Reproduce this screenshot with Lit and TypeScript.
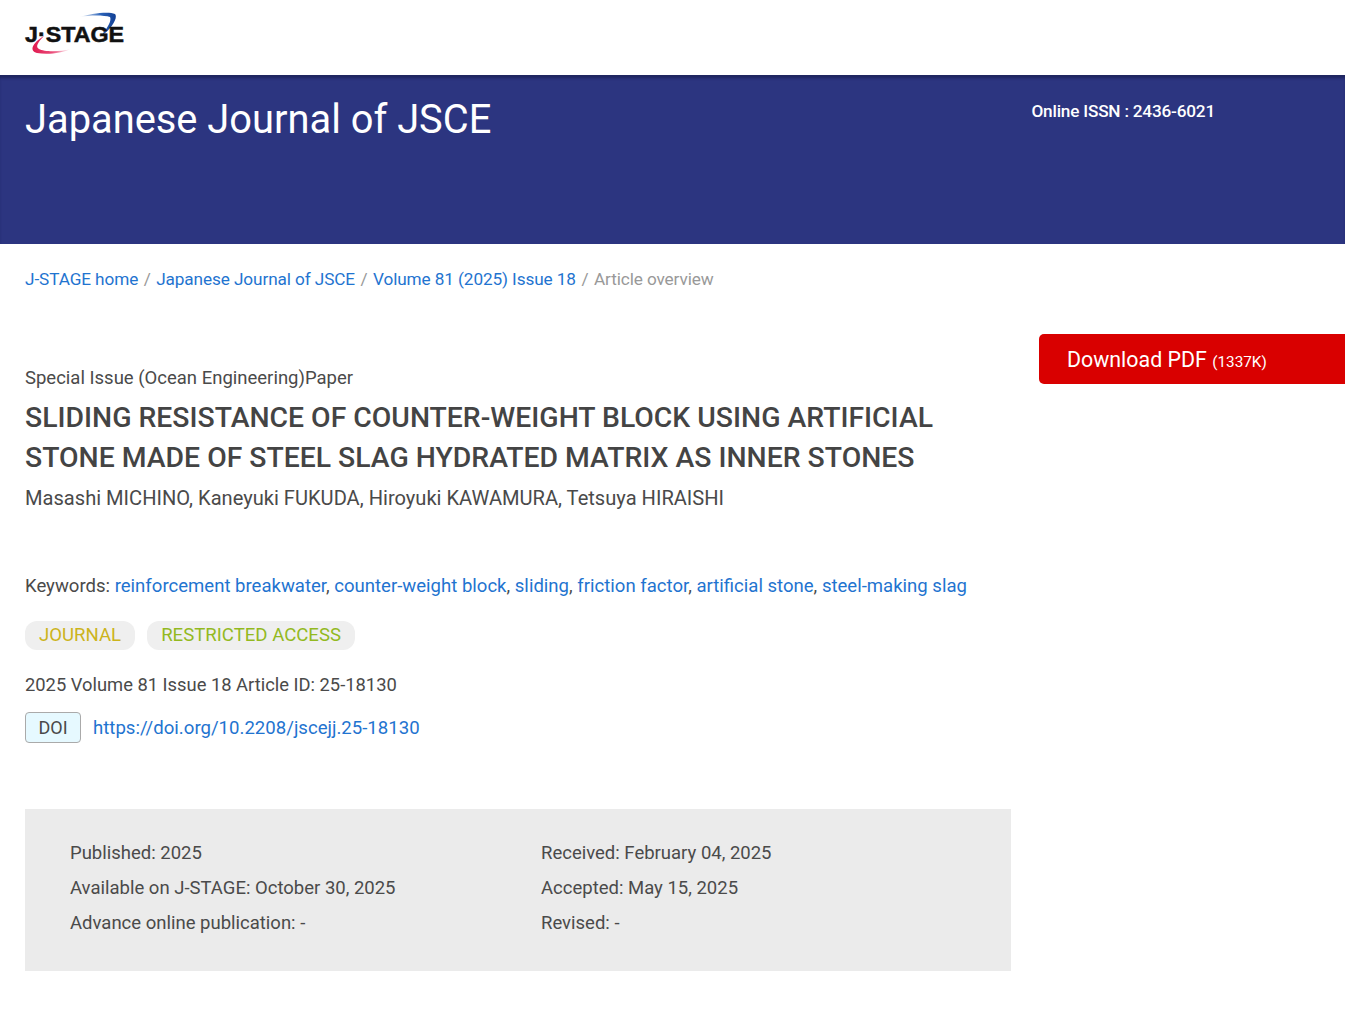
import { html, css, LitElement } from 'lit';
import { customElement } from 'lit/decorators.js';

const KEYWORDS = [
  'reinforcement breakwater',
  'counter-weight block',
  'sliding',
  'friction factor',
  'artificial stone',
  'steel-making slag',
];

@customElement('app-root')
export class AppRoot extends LitElement {
  static styles = css`
    :host {
      display: block;
      height: 1012px;
      overflow: hidden;
      background: #fff;
      font-family: Roboto, "Liberation Sans", sans-serif;
      color: #4a4a4a;
      font-size: 18.5px;
    }
    a { color: #1f74d0; text-decoration: none; }
    .top { height: 75px; padding: 12px 0 0 24px; box-sizing: border-box; }
    .top svg { display: block; }
    .band {
      height: 169px;
      background: #2c3580;
      border-top: 1px solid #1f2660;
      box-sizing: border-box;
      box-shadow: inset 0 3px 3px -1px rgba(15, 20, 60, 0.5);
      display: flex;
      justify-content: space-between;
      color: #fff;
    }
    .band h1 { margin: 18px 0 0 25px; font-size: 39.85px; line-height: 52px; font-weight: 400; }
    .issn { margin: 24px 130px 0 0; font-size: 17.2px; line-height: 22px; font-weight: 500; letter-spacing: -0.2px; }
    .crumbs { display: flex; gap: 5.5px; padding: 24px 0 0 25px; line-height: 22px; font-size: 17.2px; letter-spacing: -0.1px; }
    .crumbs .sep { color: #999; }
    .crumbs .now { color: #999; }
    .body { display: flex; justify-content: space-between; padding-top: 44px; }
    .main { width: 1012px; padding-left: 25px; box-sizing: border-box; }
    .kind { margin-top: 32px; line-height: 24px; }
    h2 { margin: 8px 0 0; font-size: 28.35px; line-height: 40px; font-weight: 500; color: #444; }
    .authors { margin-top: 7px; line-height: 26px; font-size: 20.1px; }
    .keywords { margin-top: 63px; line-height: 24px; font-size: 18.56px; }
    .tags { display: flex; gap: 12px; margin-top: 23px; }
    .tag { background: #efefef; border-radius: 12px; height: 29px; line-height: 29px; padding: 0 14px; font-size: 18.6px; }
    .tag.j { color: #ccb41c; }
    .tag.r { color: #93b91f; }
    .vol { margin-top: 23px; line-height: 24px; font-size: 18.35px; }
    .doi { display: flex; align-items: center; gap: 12px; margin-top: 15px; font-size: 18.6px; }
    .doi b {
      font-weight: 400;
      font-size: 18px;
      width: 56px;
      height: 31px;
      text-align: center;
      box-sizing: border-box;
      background: #e6f9ff;
      border: 1.5px solid #aaa;
      border-radius: 4px;
      line-height: 29px;
    }
    .dates {
      margin-top: 66px;
      width: 986px;
      height: 162px;
      background: #ebebeb;
      box-sizing: border-box;
      padding: 27px 0 0 45px;
      display: grid;
      grid-template-columns: 471px 1fr;
      grid-auto-rows: 35px;
      line-height: 35px;
    }
    .side { width: 306px; }
    .pdf {
      height: 50px;
      background: #d90000;
      border-radius: 5px 0 0 5px;
      color: #fff;
      box-sizing: border-box;
      padding-left: 28px;
      line-height: 51px;
      font-size: 21.4px;
    }
    .pdf small { font-size: 15.3px; }
  `;

  render() {
    return html`
      <div class="top">
        <svg width="104" height="46" viewBox="0 0 104 46">
          <defs>
            <linearGradient id="b" x1="0" x2="1"><stop offset="0" stop-color="#fff"/><stop offset="0.6" stop-color="#2a62b8"/><stop offset="1" stop-color="#123f94"/></linearGradient>
            <linearGradient id="r" x1="0" x2="1"><stop offset="0" stop-color="#e01a50"/><stop offset="0.5" stop-color="#ea4a78"/><stop offset="1" stop-color="#fff"/></linearGradient>
          </defs>
          <path d="M55 5 C66 2 84 -1 91 2 C94 5 89 16 76 25 C83 17 88 9 86 5 C80 3 66 3 55 5Z" fill="url(#b)"/>
          <path d="M20 24 C8 31 5 39 13 41 C24 43 38 41 47 37 C36 40 20 40 15 37 C11 35 14 30 20 24Z" fill="url(#r)"/>
          <text x="1" y="30" font-family="Liberation Sans" font-weight="700" font-size="21.5" fill="#111" stroke="#111" stroke-width="0.5" textLength="99" lengthAdjust="spacingAndGlyphs">J·STAGE</text>
        </svg>
      </div>
      <div class="band">
        <h1>Japanese Journal of JSCE</h1>
        <div class="issn">Online ISSN : 2436-6021</div>
      </div>
      <div class="crumbs">
        <a href="#">J-STAGE home</a><span class="sep">/</span>
        <a href="#">Japanese Journal of JSCE</a><span class="sep">/</span>
        <a href="#">Volume 81 (2025) Issue 18</a><span class="sep">/</span>
        <span class="now">Article overview</span>
      </div>
      <div class="body">
        <div class="main">
          <div class="kind">Special Issue (Ocean Engineering)Paper</div>
          <h2>SLIDING RESISTANCE OF COUNTER-WEIGHT BLOCK USING ARTIFICIAL STONE MADE OF STEEL SLAG HYDRATED MATRIX AS INNER STONES</h2>
          <div class="authors">Masashi MICHINO, Kaneyuki FUKUDA, Hiroyuki KAWAMURA, Tetsuya HIRAISHI</div>
          <div class="keywords">Keywords: ${KEYWORDS.map(
            (k, i) => html`<a href="#">${k}</a>${i < KEYWORDS.length - 1 ? ', ' : ''}`
          )}</div>
          <div class="tags"><span class="tag j">JOURNAL</span><span class="tag r">RESTRICTED ACCESS</span></div>
          <div class="vol">2025 Volume 81 Issue 18 Article ID: 25-18130</div>
          <div class="doi"><b>DOI</b><a href="#">https://doi.org/10.2208/jscejj.25-18130</a></div>
          <div class="dates">
            <div>Published: 2025</div><div>Received: February 04, 2025</div>
            <div>Available on J-STAGE: October 30, 2025</div><div>Accepted: May 15, 2025</div>
            <div>Advance online publication: -</div><div>Revised: -</div>
          </div>
        </div>
        <div class="side">
          <div class="pdf">Download PDF <small>(1337K)</small></div>
        </div>
      </div>
    `;
  }
}
